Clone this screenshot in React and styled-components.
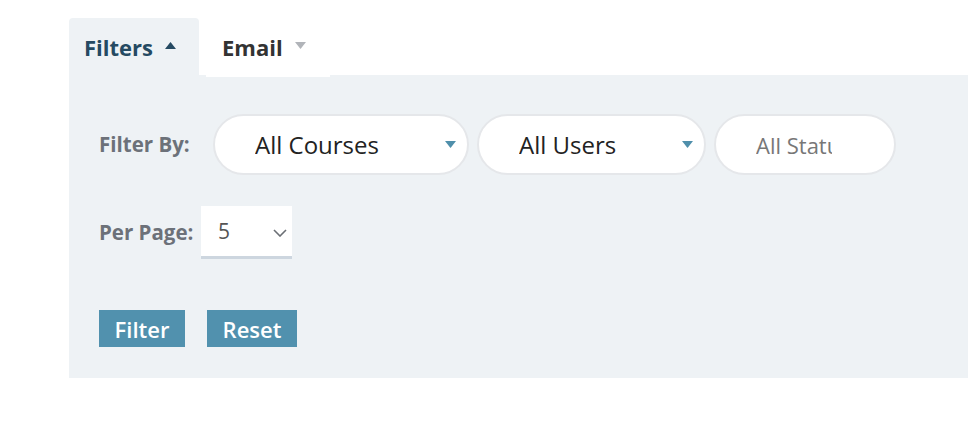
import React from "react";
import styled, { createGlobalStyle } from "styled-components";

const GlobalStyle = createGlobalStyle`
	body {
		margin: 0;
		background: #fff;
		font-family: "Open Sans", "Liberation Sans", sans-serif;
	}
`;

const Caret = ({ up, color, w = 11, h = 7 }) => (
	<svg width={w} height={h} viewBox="0 0 11 7">
		{up ? <polygon points="0,7 11,7 5.5,0" fill={color} /> : <polygon points="0,0 11,0 5.5,7" fill={color} />}
	</svg>
);

const Chevron = () => (
	<svg width="14" height="8" viewBox="0 0 14 8">
		<polyline points="1,1 7,7 13,1" fill="none" stroke="#6b6f75" strokeWidth="1.6" />
	</svg>
);

const App = () => {
	return (
		<>
			<GlobalStyle />
			<Wrapper>
				<Tabs>
					<Tab active>
						Filters <Caret up color="#254a62" />
					</Tab>
					<Tab>
						Email <Caret color="#b1b4b9" />
					</Tab>
				</Tabs>
				<Panel>
					<Row>
						<Label>Filter By:</Label>
						<Pills>
							<Pill width={256}>
								<span>All Courses</span>
								<Caret color="#4f8fab" />
							</Pill>
							<Pill width={229}>
								<span>All Users</span>
								<Caret color="#4f8fab" />
							</Pill>
							<Pill width={182} muted>
								<span>All Status</span>
							</Pill>
						</Pills>
					</Row>
					<Row second>
						<Label narrow>Per Page:</Label>
						<PageSelect>
							<span>5</span>
							<Chevron />
						</PageSelect>
					</Row>
					<Buttons>
						<Button width={86}>Filter</Button>
						<Button width={90}>Reset</Button>
					</Buttons>
				</Panel>
			</Wrapper>
		</>
	);
};

export default App;

const Wrapper = styled.div`
	padding: 18px 0 0 69px;
`;
const Tabs = styled.div`
	display: flex;
	gap: 7px;
	height: 57px;
	position: relative;
	z-index: 1;
`;
const Tab = styled.div`
	display: flex;
	align-items: center;
	gap: 12px;
	font-size: 22px;
	font-weight: 700;
	color: ${(p) => (p.active ? "#254a62" : "#333")};
	background: ${(p) => (p.active ? "#eef2f5" : "#fff")};
	border-radius: 4px 4px 0 0;
	height: ${(p) => (p.active ? "57px" : "59px")};
	padding-left: ${(p) => (p.active ? "15px" : "16px")};
	padding-right: ${(p) => (p.active ? "23px" : "24px")};
	padding-bottom: ${(p) => (p.active ? "0" : "2px")};
	box-sizing: border-box;
	svg {
		margin-top: -2px;
	}
`;
const Panel = styled.div`
	background: #eef2f5;
	padding: 39px 30px 31px;
`;
const Row = styled.div`
	display: flex;
	align-items: center;
	margin-top: ${(p) => (p.second ? "31px" : "0")};
`;
const Label = styled.div`
	font-size: 20.5px;
	font-weight: 700;
	color: #6c7179;
	width: ${(p) => (p.narrow ? "102px" : "114px")};
	flex-shrink: 0;
	white-space: nowrap;
	margin-top: -2px;
`;
const Pills = styled.div`
	display: flex;
	gap: 8px;
`;
const Pill = styled.div`
	box-sizing: border-box;
	width: ${(p) => p.width}px;
	height: 61px;
	border: 2px solid #e5e7ea;
	border-radius: 31px;
	background: #fff;
	display: flex;
	align-items: center;
	justify-content: space-between;
	padding: 0 ${(p) => (p.muted ? "62px" : "11px")} 0 40px;
	font-size: ${(p) => (p.muted ? "22px" : "24px")};
	color: ${(p) => (p.muted ? "#777" : "#222")};
	span {
		overflow: hidden;
		white-space: nowrap;
		flex: 1;
	}
	svg {
		flex-shrink: 0;
	}
`;
const PageSelect = styled.div`
	box-sizing: border-box;
	width: 91px;
	height: 53px;
	background: #fff;
	border-bottom: 3px solid #cdd6df;
	display: flex;
	align-items: center;
	justify-content: space-between;
	padding: 0 5px 0 17px;
	font-size: 21px;
	color: #555;
	svg {
		margin-top: 3px;
	}
`;
const Buttons = styled.div`
	display: flex;
	gap: 22px;
	margin-top: 51px;
`;
const Button = styled.button`
	width: ${(p) => p.width}px;
	height: 37px;
	border: none;
	background: #5191ae;
	color: #fff;
	font-family: "Open Sans", "Liberation Sans", sans-serif;
	font-size: 22px;
	font-weight: 600;
	padding: 0;
	cursor: pointer;
`;
